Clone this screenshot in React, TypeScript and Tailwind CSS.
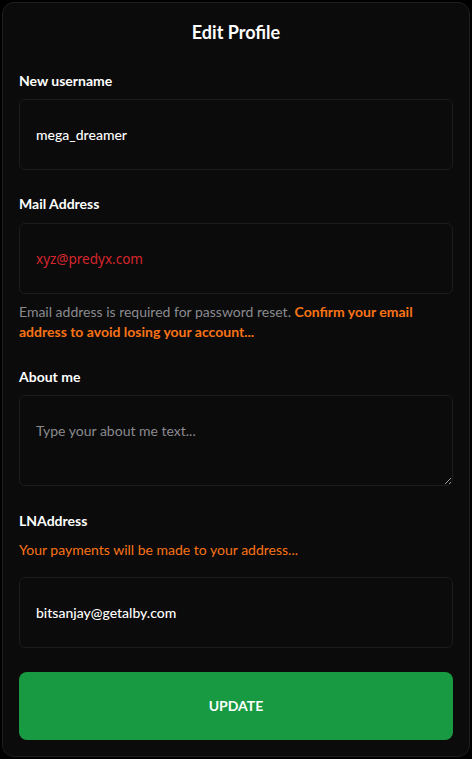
import React, { useState } from 'react'

const lato = { fontFamily: 'Lato, "Liberation Sans", sans-serif' }

function Label({ children }: { children: React.ReactNode }) {
  return <label className="block text-sm font-bold leading-5 text-white">{children}</label>
}

export default function App() {
  const [username, setUsername] = useState('mega_dreamer')
  const [email, setEmail] = useState('xyz@predyx.com')
  const [about, setAbout] = useState('')
  const [ln, setLn] = useState('bitsanjay@getalby.com')

  const inputCls =
    'block w-full h-[71px] rounded-md border border-[#1c1c1c] bg-[#0b0b0b] px-4 text-sm leading-5 outline-none'

  return (
    <div className="min-h-[759px] bg-black p-[2px] font-['Lato',sans-serif]" style={lato}>
      {/* Card */}
      <div className="rounded-xl border border-[#1e1e1e] bg-[#0b0b0b] px-4 pt-[15px] pb-4">
        <h2 className="text-center text-lg font-bold leading-7 text-white">Edit Profile</h2>

        {/* Username */}
        <div className="mt-[25px]">
          <Label>New username</Label>
          <input
            className={inputCls + ' mt-2 font-medium text-white'}
            value={username}
            onChange={(e) => setUsername(e.target.value)}
          />
        </div>

        {/* Mail */}
        <div className="mt-6">
          <Label>Mail Address</Label>
          <input
            className={inputCls + " mt-[9px] text-[13.5px] text-[#d7262d] font-['Noto_Sans',sans-serif]"}
            value={email}
            onChange={(e) => setEmail(e.target.value)}
          />
          <p className="mt-2 text-sm leading-5 text-[#8a8a8f]">
            Email address is required for password reset.{' '}
            <span className="font-bold text-[#f97316]">
              Confirm your email address to avoid losing your account...
            </span>
          </p>
        </div>

        {/* About */}
        <div className="mt-[25px]">
          <Label>About me</Label>
          <textarea
            className="mt-2 block h-[91px] w-full rounded-md border border-[#1c1c1c] bg-[#0b0b0b] px-4 py-[25px] text-sm leading-5 text-white placeholder:text-[#8a8a8f] outline-none"
            placeholder="Type your about me text..."
            value={about}
            onChange={(e) => setAbout(e.target.value)}
          />
        </div>

        {/* LN */}
        <div className="mt-[25px]">
          <Label>LNAddress</Label>
          <p className="mt-[9px] text-sm leading-5 text-[#f97316]">
            Your payments will be made to your address...
          </p>
          <input
            className={inputCls + ' mt-[17px] font-medium text-white'}
            value={ln}
            onChange={(e) => setLn(e.target.value)}
          />
        </div>

        <button className="mt-6 flex h-[68px] w-full items-center justify-center rounded-lg bg-[#189a42] text-sm font-bold uppercase text-white">
          Update
        </button>
      </div>
    </div>
  )
}
